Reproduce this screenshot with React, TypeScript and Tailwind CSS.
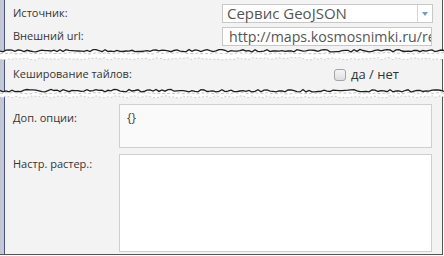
import React from 'react';

const FONT = { fontFamily: '"Open Sans", "DejaVu Sans", sans-serif' };

// ragged line points for the torn paper edges
const ragged = (y0: number, amp: number, seed: number) => {
  let s = seed;
  const rnd = () => {
    s = (s * 9301 + 49297) % 233280;
    return s / 233280;
  };
  const pts: string[] = [];
  for (let x = 0; x <= 444; x += 3) {
    pts.push(`${x},${(y0 + rnd() * amp).toFixed(1)}`);
  }
  return pts;
};

const PanelFill = () => (
  <>
    <rect x="0" y="0" width="444" height="20" fill="#f3f3f3" />
    <rect x="0" y="0" width="4" height="20" fill="#c4c7d6" />
    <rect x="4" y="0" width="1" height="20" fill="#4a5580" />
    <rect x="442" y="0" width="1" height="20" fill="#555" />
    <rect x="443" y="0" width="1" height="20" fill="#fff" />
  </>
);

const TornGap = ({ h, id, seed }: { h: number; id: string; seed: number }) => {
  const top = ragged(1.5, 2.5, seed);
  const bottom = ragged(h - 3.5, 2.5, seed + 7);
  const topShape = `M0,0 H444 V${top[top.length - 1].split(',')[1]} L${[...top].reverse().join(' L')} Z`;
  const bottomShape = `M${bottom.join(' L')} V${h} H0 Z`;
  return (
    <svg width="444" height={h} className="block">
      <defs>
        <clipPath id={`${id}-t`}>
          <path d={topShape} />
        </clipPath>
        <clipPath id={`${id}-b`}>
          <path d={bottomShape} />
        </clipPath>
      </defs>
      <g clipPath={`url(#${id}-t)`}>
        <PanelFill />
      </g>
      <polyline points={top.join(' ')} fill="none" stroke="#1e1e1e" strokeWidth="1.3" />
      <polyline points={ragged(4.5, 1.5, seed + 3).join(' ')} fill="none" stroke="#b5b5b5" strokeWidth="0.8" strokeDasharray="3 2" />
      <g clipPath={`url(#${id}-b)`}>
        <PanelFill />
      </g>
      <polyline points={bottom.join(' ')} fill="none" stroke="#c4c4c4" strokeWidth="0.8" strokeDasharray="2 2" />
    </svg>
  );
};

const Section = ({ children, className = '' }: { children: React.ReactNode; className?: string }) => (
  <div className={`flex w-[443px] ${className}`}>
    <div className="w-[4px] shrink-0 bg-[#c4c7d6]" />
    <div className="w-px shrink-0 bg-[#4a5580]" />
    <div className="flex-1 bg-[#f3f3f3] border-r border-[#555]">{children}</div>
  </div>
);

export default function App() {
  return (
    <div className="w-[444px] h-[256px] bg-white overflow-hidden text-[11px] text-[#333]" style={FONT}>
      <Section className="h-[48px]">
        <div className="pt-[4px] pl-[8px] flex flex-col gap-[4px]">
          <div className="flex h-[19px] items-center">
            <span className="w-[209px]">Источник:</span>
            <div className="flex h-[19px] w-[211px] bg-white border border-[#c8c8c8]">
              <span className="flex-1 pl-[4px] text-[15px] leading-[17px] text-[#555]">Сервис GeoJSON</span>
              <div className="w-[15px] border-l border-[#d6d6d6] flex items-center justify-center">
                <div className="w-0 h-0 border-l-[3px] border-r-[3px] border-t-[4px] border-l-transparent border-r-transparent border-t-[#6c9ec8]" />
              </div>
            </div>
          </div>
          <div className="flex h-[19px] items-center">
            <span className="w-[209px]">Внешний url:</span>
            <div className="h-[19px] w-[210px] bg-white border border-[#c8c8c8] overflow-hidden whitespace-nowrap pl-[6px] text-[14.2px] leading-[17px] text-[#555]">
              http://maps.kosmosnimki.ru/rest/ver1/layers/geojson
            </div>
          </div>
        </div>
      </Section>
      <TornGap h={13} id="g1" seed={11} />
      <Section className="h-[27px]">
        <div className="flex h-full items-center pl-[8px]">
          <span className="w-[321px]">Кеширование тайлов:</span>
          <div className="w-[12px] h-[12px] rounded-[3px] border border-[#a5a5a5] bg-gradient-to-b from-[#f6f6f6] to-[#dedede]" />
          <span className="ml-[5px] text-[13px]">да / нет</span>
        </div>
      </Section>
      <TornGap h={11} id="g2" seed={29} />
      <Section className="h-[156px] border-b border-[#555]">
        <div className="pt-[5px] pl-[8px] flex flex-col gap-[6px]">
          <div className="flex">
            <span className="w-[106px] pt-[6px]">Доп. опции:</span>
            <div className="w-[313px] h-[44px] bg-[#fafafa] border border-[#cfcfcf] px-[7px] pt-[4px] text-[12px] text-[#444]">{'{}'}</div>
          </div>
          <div className="flex">
            <span className="w-[106px] pt-[2px]">Настр. растер.:</span>
            <div className="w-[313px] h-[98px] bg-white border border-[#cfcfcf]" />
          </div>
        </div>
      </Section>
    </div>
  );
}
